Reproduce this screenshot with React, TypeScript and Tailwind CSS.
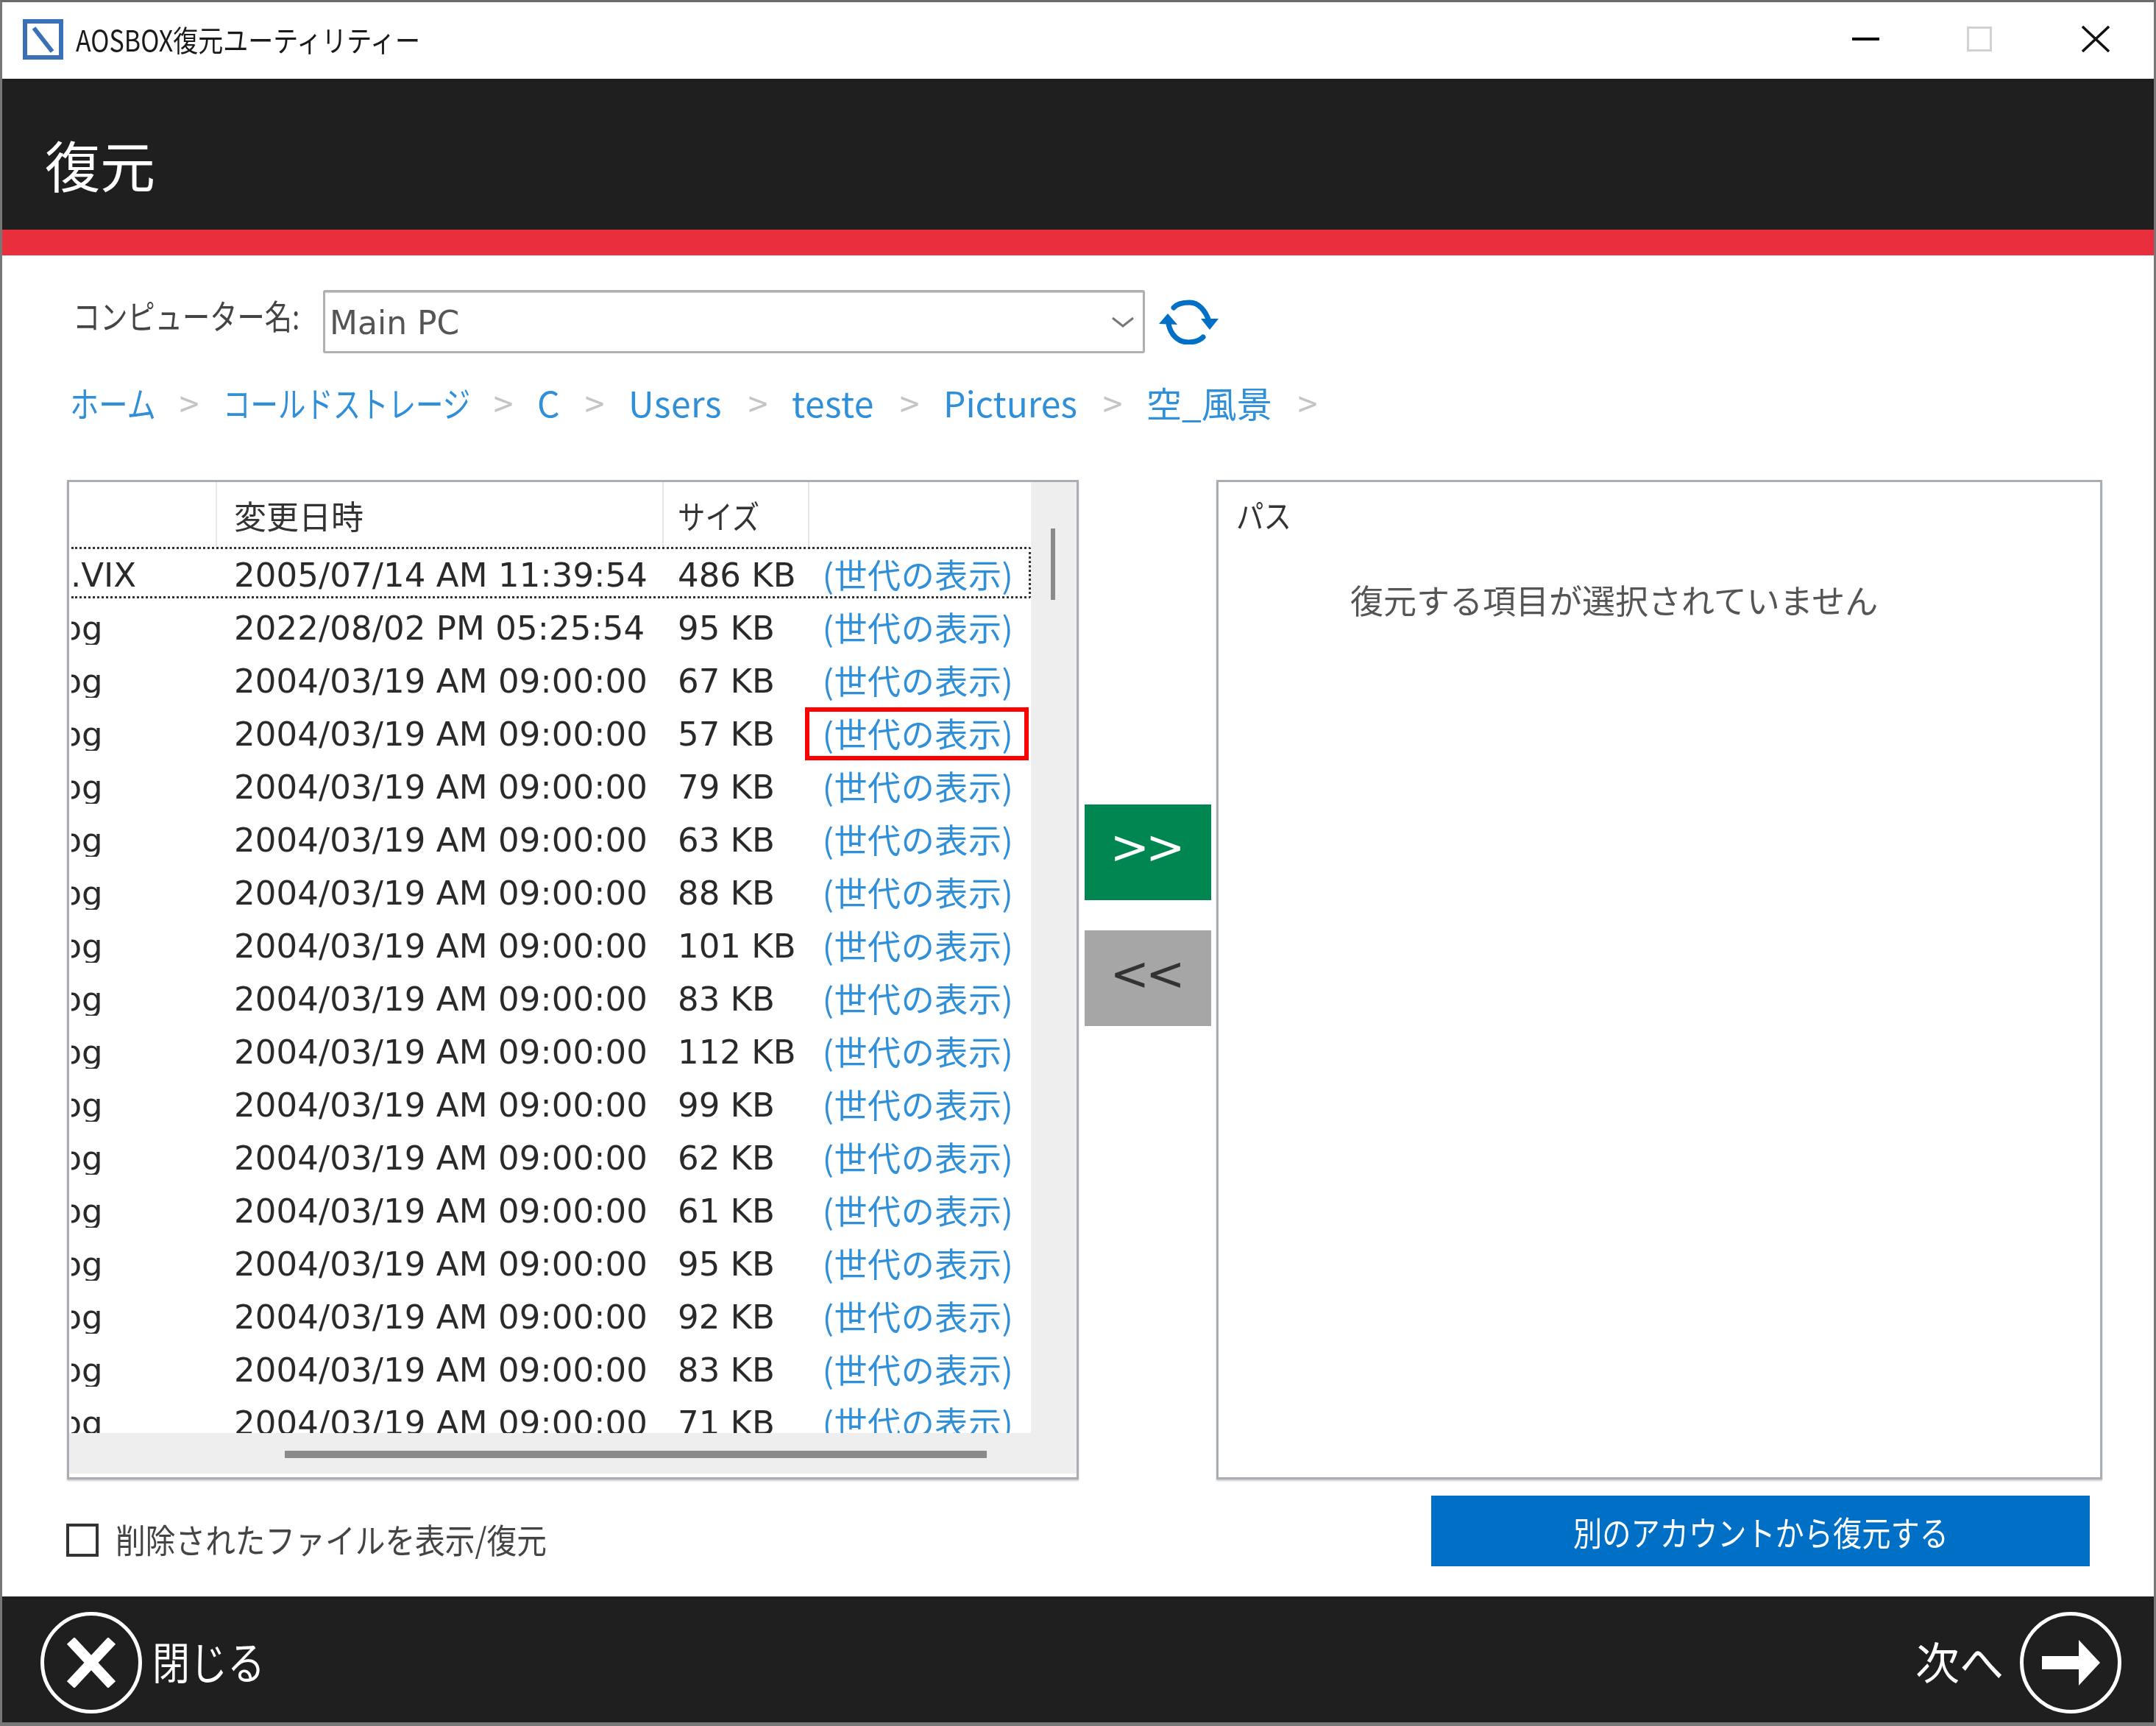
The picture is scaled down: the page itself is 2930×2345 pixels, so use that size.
const jp = "font-['Noto_Sans_CJK_JP','Noto_Sans',sans-serif]";

const rows = [
  [".VIX", "2005/07/14 AM 11:39:54", "486 KB"],
  ["jpg", "2022/08/02 PM 05:25:54", "95 KB"],
  ["jpg", "2004/03/19 AM 09:00:00", "67 KB"],
  ["jpg", "2004/03/19 AM 09:00:00", "57 KB"],
  ["jpg", "2004/03/19 AM 09:00:00", "79 KB"],
  ["jpg", "2004/03/19 AM 09:00:00", "63 KB"],
  ["jpg", "2004/03/19 AM 09:00:00", "88 KB"],
  ["jpg", "2004/03/19 AM 09:00:00", "101 KB"],
  ["jpg", "2004/03/19 AM 09:00:00", "83 KB"],
  ["jpg", "2004/03/19 AM 09:00:00", "112 KB"],
  ["jpg", "2004/03/19 AM 09:00:00", "99 KB"],
  ["jpg", "2004/03/19 AM 09:00:00", "62 KB"],
  ["jpg", "2004/03/19 AM 09:00:00", "61 KB"],
  ["jpg", "2004/03/19 AM 09:00:00", "95 KB"],
  ["jpg", "2004/03/19 AM 09:00:00", "92 KB"],
  ["jpg", "2004/03/19 AM 09:00:00", "83 KB"],
  ["jpg", "2004/03/19 AM 09:00:00", "71 KB"],
];

const crumbs = [
  { label: "ホーム", w: "w-[116px]", fit: "scale-x-[0.82]" },
  { label: "コールドストレージ", w: "w-[335px]", fit: "scale-x-[0.78]" },
  { label: "C", w: "w-[32px]", fit: "" },
  { label: "Users", w: "w-[130px]", fit: "tracking-[0.5px]" },
  { label: "teste", w: "w-[114px]", fit: "tracking-[0.5px]" },
  { label: "Pictures", w: "w-[184px]", fit: "" },
  { label: "空_風景", w: "w-[173px]", fit: "" },
];

function FileRow({ row, index }: { row: string[]; index: number }) {
  const focused = index === 0;
  const marked = index === 3;
  return (
    <div
      className={`ml-[3px] flex shrink-0 items-center text-[45px] leading-none text-[#2a2a2a] ${
        focused
          ? "-mt-[2px] mb-[4px] h-[70px] rounded-r-[3px] border-y-[3px] border-r-[3px] border-dotted border-[#333] pt-[6px]"
          : "h-[72px]"
      }`}
    >
      <div className="w-[221px] overflow-hidden">
        <div className={focused ? "-ml-[1px]" : "-ml-[27px]"}>{row[0]}</div>
      </div>
      <div className="w-[603px] whitespace-nowrap tracking-[0.1px]">{row[1]}</div>
      <div className="w-[173px] whitespace-nowrap">{row[2]}</div>
      <div
        className={`flex h-[72px] w-[304px] items-center justify-center whitespace-nowrap border-[6px] pb-[4px] pl-[3px] tracking-[0.6px] text-[#2f8fd8] ${jp} ${
          marked ? "border-[#f00]" : "border-transparent"
        }`}
      >
        (世代の表示)
      </div>
    </div>
  );
}

export default function App() {
  return (
    <div className={`flex h-[2345px] w-[2930px] flex-col overflow-hidden border-x-[3px] border-t-[3px] border-b-[5px] border-x-[#777] border-t-[#6b6b6b] border-b-[#777] bg-white blur-[0.6px] ${jp}`}>
      {/* title bar */}
      <div className="flex h-[104px] shrink-0 items-center pb-[4px]">
        <svg viewBox="0 0 55 55" className="ml-[28px] h-[55px] w-[55px]">
          <rect x="3" y="3" width="49" height="49" fill="#fff" stroke="#3b6fb6" strokeWidth="6" />
          <path d="M15 12 L40 44" stroke="#3b6fb6" strokeWidth="6" />
        </svg>
        <span className="ml-[17px] inline-block origin-left scale-x-[0.85] whitespace-nowrap text-[40px] leading-none text-[#1a1a1a]">AOSBOX復元ユーティリティー</span>
        <div className="ml-auto flex items-center pr-[60px]">
          <div className="h-[4px] w-[37px] bg-black" />
          <div className="ml-[119px] h-[34px] w-[34px] border-[3px] border-[#d2d2d2]" />
          <svg viewBox="0 0 38 36" className="ml-[122px] h-[36px] w-[38px]">
            <path d="M1 1 L37 35 M37 1 L1 35" stroke="#111" strokeWidth="3.5" />
          </svg>
        </div>
      </div>

      {/* heading */}
      <div className="flex h-[205px] shrink-0 items-center bg-[#1f1f1f] pt-[26px] pl-[58px] text-[75px] leading-none text-white">復元</div>
      <div className="h-[35px] shrink-0 bg-[#e92e3d]" />

      {/* computer selector */}
      <div className="flex h-[133px] shrink-0 items-center pt-[47px] pl-[96px]">
        <div className="mb-[19px] w-[340px]">
          <span className="inline-block origin-left scale-x-[0.81] whitespace-nowrap text-[46px] leading-none text-[#444]">コンピューター名:</span>
        </div>
        <div className="flex h-[86px] w-[1117px] items-center justify-between rounded-[3px] border-[3px] border-[#b0b0b0] pr-[11px] pl-[6px] shadow-[inset_0_1px_1px_#ccc]">
          <span className="pt-[4px] font-['DejaVu_Sans',sans-serif] text-[44px] leading-none text-[#555]">Main PC</span>
          <svg viewBox="0 0 32 15" className="h-[15px] w-[32px]">
            <path d="M2 2 L16 13 L30 2" fill="none" stroke="#777" strokeWidth="3" />
          </svg>
        </div>
        <svg viewBox="0 0 81 61" className="ml-[19px] h-[61px] w-[81px]">
          <path d="M20 11 C24 6 32 4 42 4 C54 4 63 15 68 29" fill="none" stroke="#0070c6" strokeWidth="7" strokeLinecap="round" />
          <path d="M57 26 L81 26 L69 41 Z" fill="#0070c6" />
          <path d="M60 51 C55 56 48 58 40 58 C26 58 16 48 13 33" fill="none" stroke="#0070c6" strokeWidth="7" strokeLinecap="round" />
          <path d="M0 33 L25 34 L12 19 Z" fill="#0070c6" />
        </svg>
      </div>

      {/* breadcrumb */}
      <div className="flex h-[172px] shrink-0 items-start gap-[32px] pt-[42px] pl-[92px] text-[48px] leading-none">
        {crumbs.map((c) => (
          <div key={c.label} className="flex items-center gap-[32px]">
            <div className={c.w}>
              <span className={`inline-block origin-left whitespace-nowrap text-[#2f8fd8] ${c.fit}`}>{c.label}</span>
            </div>
            <div className="flex w-[28px] justify-center text-[#c4c4c4]">&gt;</div>
          </div>
        ))}
      </div>

      {/* panels */}
      <div className="flex h-[1358px] shrink-0 pl-[88px]">
        <div className="flex w-[1375px] shrink-0 flex-col border-[3px] border-[#a9aeb5] shadow-[0_2px_2px_#ccc]">
          <div className="flex min-h-0 flex-1">
            <div className="flex w-[1307px] flex-col overflow-hidden font-['DejaVu_Sans','Noto_Sans_CJK_JP',sans-serif]">
              <div className={`flex h-[90px] shrink-0 text-[44px] leading-none text-[#333] ${jp}`}>
                <div className="w-[201px] border-r-2 border-[#e8e8e8]" />
                <div className="flex w-[607px] items-center border-r-2 border-[#e8e8e8] pl-[23px]">変更日時</div>
                <div className="flex w-[198px] items-center border-r-2 border-[#e8e8e8] pl-[19px]">
                  <span className="inline-block origin-left scale-x-[0.85] whitespace-nowrap">サイズ</span>
                </div>
              </div>
              {rows.map((row, i) => (
                <FileRow key={i} row={row} index={i} />
              ))}
            </div>
            <div className="flex-1 bg-[#eeeeee] pt-[63px] pl-[27px]">
              <div className="h-[97px] w-[6px] bg-[#8a8a8a]" />
            </div>
          </div>
          <div className="h-[55px] shrink-0 bg-[#eeeeee] pt-[24px] pl-[293px]">
            <div className="h-[10px] w-[954px] bg-[#8a8a8a]" />
          </div>
          <div className="h-[5px] shrink-0" />
        </div>

        <div className="flex w-[187px] shrink-0 flex-col items-center pt-[441px] pl-[1px] font-['DejaVu_Sans',sans-serif]">
          <div className="flex h-[130px] w-[172px] items-center justify-center bg-[#008751] pr-[6px] pb-[14px] text-[64px] leading-none tracking-[-5px] text-white">&gt;&gt;</div>
          <div className="mt-[41px] flex h-[130px] w-[172px] items-center justify-center bg-[#a6a6a6] pr-[6px] pb-[12px] text-[64px] leading-none tracking-[-5px] text-[#333]">&lt;&lt;</div>
        </div>

        <div className="w-[1204px] shrink-0 border-[3px] border-[#a9aeb5] shadow-[0_2px_2px_#ccc]">
          <div className="pt-[22px] pl-[24px] text-[44px] leading-none text-[#333]">
            <span className="inline-block origin-left scale-x-[0.85]">パス</span>
          </div>
          <div className="mt-[71px] pl-[179px] text-[45px] leading-none whitespace-nowrap text-[#555]">復元する項目が選択されていません</div>
        </div>
      </div>

      {/* options row */}
      <div className="flex h-[159px] shrink-0 items-start justify-between pr-[87px] pl-[87px]">
        <div className="mt-[57px] flex items-center">
          <div className="h-[45px] w-[44px] border-[4px] border-[#333] bg-white" />
          <span className="mb-[4px] ml-[23px] inline-block origin-left scale-x-[0.885] whitespace-nowrap text-[46px] leading-none text-[#444]">削除されたファイルを表示/復元</span>
        </div>
        <div className="mt-[22px] flex h-[96px] w-[895px] items-center justify-center bg-[#0070c6] text-[46px] leading-none text-white">
          <span className="inline-block scale-x-[0.853] whitespace-nowrap">別のアカウントから復元する</span>
        </div>
      </div>

      {/* footer */}
      <div className="flex min-h-0 flex-1 items-center justify-between bg-[#1f1f1f] pt-[9px] pr-[44px] pl-[52px] text-white">
        <div className="flex items-center">
          <div className="flex h-[138px] w-[138px] items-center justify-center rounded-full border-[5px] border-white">
            <svg viewBox="0 0 72 68" className="h-[68px] w-[72px]">
              <path d="M8 4 L64 64 M64 4 L8 64" stroke="#fff" strokeWidth="14" />
            </svg>
          </div>
          <span className="mb-[6px] ml-[14px] inline-block origin-left scale-x-[0.85] whitespace-nowrap text-[60px] leading-none">閉じる</span>
        </div>
        <div className="flex items-center">
          <span className="mr-[22px] mb-[6px] text-[60px] leading-none">次へ</span>
          <div className="flex h-[138px] w-[138px] items-center justify-center rounded-full border-[5px] border-white">
            <svg viewBox="0 0 79 62" className="h-[62px] w-[79px]">
              <path d="M0 22 H50 V0 L79 31 L50 62 V40 H0 Z" fill="#fff" />
            </svg>
          </div>
        </div>
      </div>
    </div>
  );
}
